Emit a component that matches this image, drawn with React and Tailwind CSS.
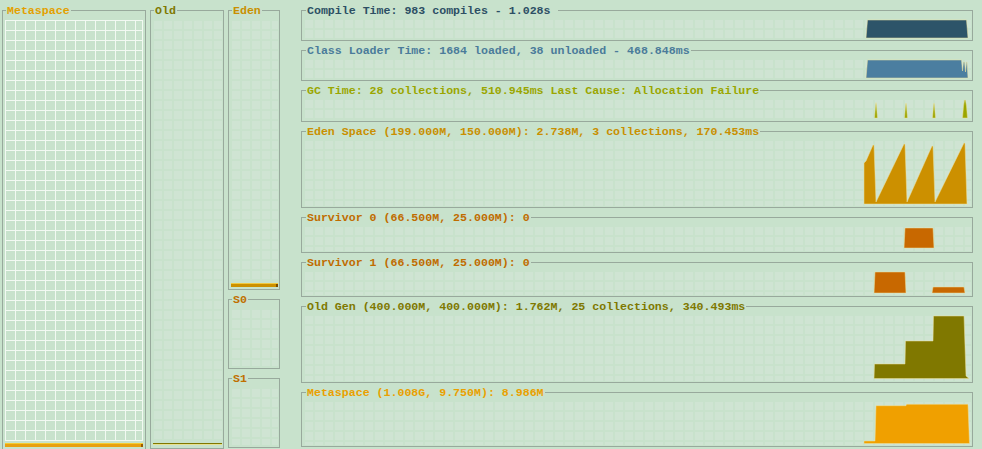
const font = "font-['Liberation_Mono',monospace] font-bold text-[11.6px] leading-[13px]";

const faint =
  "bg-[#cfe4d3] bg-[image:linear-gradient(to_right,#c8e2cc_2px,transparent_2px),linear-gradient(to_bottom,#c8e2cc_2px,transparent_2px)] bg-[size:10px_10px]";

const panels = [
  {
    title: "Compile Time: 983 compiles - 1.028s ",
    text: "text-[#2c4f64]",
    ih: "h-[21px]",
    y0: 18,
    h: 21,
    fill: "#2d5469",
    shapes: ["866,38 867.5,20 966.5,20 968,38"],
  },
  {
    title: "Class Loader Time: 1684 loaded, 38 unloaded - 468.848ms",
    text: "text-[#4a7b9a]",
    ih: "h-[21px]",
    y0: 58,
    h: 21,
    fill: "#4b7ea0",
    shapes: ["866,78 867.5,60 961.5,60 962.5,71 963.5,62 964.5,62 965.5,72 966.5,62 967,62 968,78"],
  },
  {
    title: "GC Time: 28 collections, 510.945ms Last Cause: Allocation Failure",
    text: "text-[#9aa600]",
    ih: "h-[22px]",
    y0: 98,
    h: 22,
    fill: "#9ba500",
    shapes: [
      "874.5,118 875.5,106 876,102.5 876.5,106 877.5,118",
      "904.5,118 905.5,106 906,103 906.5,106 907.5,118",
      "932.5,118 933.5,106 934,103 934.5,106 935.5,118",
      "962.5,118 963.5,106 964.5,100 965.5,100 966.5,106 967.5,118",
    ],
  },
  {
    title: "Eden Space (199.000M, 150.000M): 2.738M, 3 collections, 170.453ms",
    text: "text-[#c98f00]",
    ih: "h-[67px]",
    y0: 139,
    h: 67,
    fill: "#cc9000",
    shapes: [
      "864,204 864,163 866,161 873,145 874,145 876,202 904,144 905,144 907,202 932,146 933,146 935,202 964,143 965,143 967,204 968,204",
    ],
  },
  {
    title: "Survivor 0 (66.500M, 25.000M): 0",
    text: "text-[#c06c00]",
    ih: "h-[26px]",
    y0: 225,
    h: 26,
    fill: "#c86800",
    shapes: ["904,248 905,228 933,228 934,248"],
  },
  {
    title: "Survivor 1 (66.500M, 25.000M): 0",
    text: "text-[#c06c00]",
    ih: "h-[25px]",
    y0: 270,
    h: 25,
    fill: "#c86800",
    shapes: ["874,293 875,272 905,272 906,293", "932,293 933,287 964,287 965,293"],
  },
  {
    title: "Old Gen (400.000M, 400.000M): 1.762M, 25 collections, 340.493ms",
    text: "text-[#7f7800]",
    ih: "h-[67px]",
    y0: 314,
    h: 67,
    fill: "#807800",
    shapes: ["874,378.5 874.5,364 905,364 905.5,341 933,341 933.5,316 964,316 966,376 969,378.5"],
  },
  {
    title: "Metaspace (1.008G, 9.750M): 8.986M",
    text: "text-[#eaa000]",
    ih: "h-[45px]",
    y0: 400,
    h: 45,
    fill: "#f0a000",
    shapes: ["864,443.5 864,441 875,441 876,405.7 906,405.7 906.5,404.3 968,404.3 969.5,443.5"],
  },
];

function ChartPanel({ p }) {
  return (
    <fieldset className="border border-[#98a99c] p-0">
      <legend className={`${font} ${p.text} ml-[4px] px-[1px] whitespace-pre`}>{p.title}</legend>
      <div className="p-[1px]">
        <div className={`${p.ih} ${faint}`}>
          <svg
            width="668"
            height={p.h}
            viewBox={`303 ${p.y0} 668 ${p.h}`}
            preserveAspectRatio="none"
            className="block"
          >
            {p.shapes.map((s, i) => (
              <polygon key={i} points={s} fill={p.fill} stroke="#efe3a0" strokeWidth="0.7" strokeOpacity="0.7" />
            ))}
          </svg>
        </div>
      </div>
    </fieldset>
  );
}

function Box({ title, text, width, children }) {
  return (
    <fieldset className={`${width} border border-[#98a99c] p-0`}>
      <legend className={`${font} ${text} ml-[3px] px-[1px]`}>{title}</legend>
      {children}
    </fieldset>
  );
}

export default function App() {
  return (
    <div className="w-[982px] h-[449px] overflow-hidden bg-[#c8e2cc] flex items-start pl-[2px] pt-[4px]">
      {/* heap spaces */}
      <Box title="Metaspace" text="text-[#e3a000]" width="w-[144px]">
        <div className="pl-[2px] pt-[3px] pb-[2px]">
          <div className="w-[138px] h-[421px] border-r border-b border-[#f2f9f2] bg-[image:linear-gradient(to_right,#f2f9f2_1px,transparent_1px),linear-gradient(to_bottom,#f2f9f2_1px,transparent_1px)] bg-[size:10px_10px]" />
          <div className="mt-[2px] w-[138px] h-[4px] flex border-t border-[#f4cc30] bg-[#e8a010]">
            <div className="flex-1" />
            <div className="w-[2px] bg-[#9a5a00]" />
          </div>
        </div>
      </Box>

      <div className="ml-[4px]">
        <Box title="Old" text="text-[#7f7800]" width="w-[74px]">
          <div className="px-[1px] pt-[2px] pb-[3px]">
            <div className={`h-[422px] ${faint}`} />
            <div className="mt-[2px] ml-[1px] h-[2px] border-t border-[#7f7800] bg-[#e6e090]" />
          </div>
        </Box>
      </div>

      <div className="ml-[4px] flex flex-col gap-[3px]">
        <Box title="Eden" text="text-[#c98f00]" width="w-[52px]">
          <div className="px-[1px] pt-[2px] pb-[2px]">
            <div className={`h-[262px] ${faint}`} />
            <div className="mt-[2px] ml-[1px] h-[4px] flex border-t border-[#f0c840] bg-[#cc9000]">
              <div className="flex-1" />
              <div className="w-[2px] bg-[#7a4a00]" />
            </div>
          </div>
        </Box>
        <Box title="S0" text="text-[#c07000]" width="w-[52px]">
          <div className="px-[1px] pt-[2px] pb-[2px]">
            <div className={`h-[58px] ${faint}`} />
          </div>
        </Box>
        <Box title="S1" text="text-[#c07000]" width="w-[52px]">
          <div className="px-[1px] pt-[2px] pb-[2px]">
            <div className={`h-[58px] ${faint}`} />
          </div>
        </Box>
      </div>

      {/* graphs */}
      <div className="ml-[21px] w-[672px] flex flex-col gap-[3px]">
        {panels.map((p, i) => (
          <ChartPanel key={i} p={p} />
        ))}
      </div>
    </div>
  );
}
